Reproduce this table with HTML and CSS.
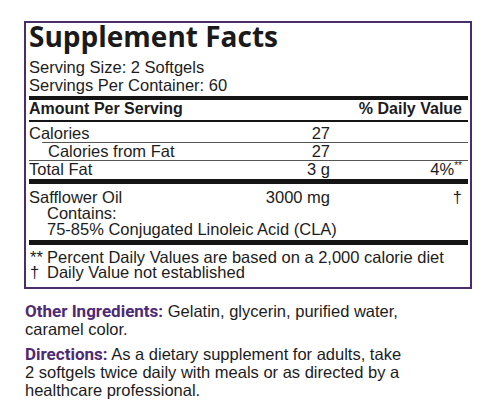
FILE: index.html
```html
<!DOCTYPE html>
<html lang="en">
    <head>
        <meta charset="UTF-8">
        <meta name="viewport" content="width=device-width, initial-scale=1.0">
        <title>Supplement Facts</title>
        <link rel="stylesheet" href="styles.css">
    </head>
    <body>

        <div class="facts">
            <h1 class="facts-title">Supplement Facts</h1>
            <div class="serving">Serving Size: 2 Softgels</div>
            <div class="serving">Servings Per Container: 60</div>
            <div class="bar bar-top"></div>

            <div class="head-row">
                <span>Amount Per Serving</span>
                <span>% Daily Value</span>
            </div>

            <div class="row row-calories">
                <span>Calories</span>
                <span class="amount">27</span>
                <span class="dv"></span>
            </div>
            <div class="row row-sub">
                <span>Calories from Fat</span>
                <span class="amount">27</span>
                <span class="dv"></span>
            </div>
            <div class="row row-fat">
                <span>Total Fat</span>
                <span class="amount">3 g</span>
                <span class="dv">4%<sup>**</sup></span>
            </div>
            <div class="bar"></div>

            <div class="oil">
                <div class="row">
                    <span>Safflower Oil</span>
                    <span class="amount">3000 mg</span>
                    <span class="dv">†</span>
                </div>
                <div class="indent">Contains:</div>
                <div class="indent">75-85% Conjugated Linoleic Acid (CLA)</div>
            </div>
            <div class="bar bar-low"></div>

            <div class="notes">
                <span class="mark">**</span>
                <span>Percent Daily Values are based on a 2,000 calorie diet</span>
                <span class="mark">†</span>
                <span>Daily Value not established</span>
            </div>
        </div>

        <div class="info">
            <p><b>Other Ingredients:</b> Gelatin, glycerin, purified water, caramel color.</p>
            <p><b>Directions:</b> As a dietary supplement for adults, take 2 softgels twice daily with meals or as directed by a healthcare professional.</p>
        </div>

    </body>
</html>
```

FILE: styles.css
```css
/* etiqueta de suplemento */
body {
    margin: 0;
    background-color: #fff;
    color: #1c1c1c;
    font-family: "Liberation Sans", Arial, sans-serif;
    font-size: 16.5px;
}
.facts {
    width: 439px;
    margin: 21px 0 0 24px;
    padding: 0 2px 0 3px;
    border: 2px solid #4b2d6c;
}
.facts-title {
    margin: 0 0 9px;
    font-family: "Open Sans", sans-serif;
    font-size: 28px;
    font-weight: 700;
    line-height: 26px;
    color: #1a1a1a;
}
.serving {
    line-height: 18px;
}
.bar {
    height: 5px;
    margin-top: 1px;
    background-color: #151515;
}
.bar-top {
    height: 4px;
    margin-top: 2px;
}
.bar-low {
    margin-top: 3px;
}
.head-row {
    display: flex;
    justify-content: space-between;
    padding: 0 6px 2px 0;
    font-size: 16px;
    font-weight: bold;
    line-height: 18px;
    border-bottom: 2px solid #151515;
}
.row {
    display: grid;
    grid-template-columns: 1fr 130px 138px;
    line-height: 17px;
}
.row .amount {
    text-align: right;
}
.row .dv {
    text-align: right;
    padding-right: 6px;
}
.row sup {
    font-size: 10px;
    line-height: 0;
}
.row-calories {
    padding-top: 2px;
    line-height: 18px;
}
.row-sub {
    margin-left: 13px;
    padding-left: 6px;
    border-top: 1px solid #555;
}
.row-fat {
    border-top: 1px solid #555;
}
.oil {
    padding-top: 5px;
}
.oil .row,
.oil .indent {
    line-height: 16px;
}
.indent {
    padding-left: 18px;
}
.notes {
    display: grid;
    grid-template-columns: 18px 1fr;
    padding: 5px 0 7px;
    line-height: 15px;
}
.notes .mark {
    padding-left: 1px;
}
.info {
    width: 386px;
    margin: 13px 0 0 25px;
}
.info p {
    margin: 0 0 7px;
    line-height: 18px;
}
.info b {
    font-family: Roboto, "Liberation Sans", sans-serif;
    font-size: 17px;
    font-weight: 700;
    color: #4e2a74;
}
```
